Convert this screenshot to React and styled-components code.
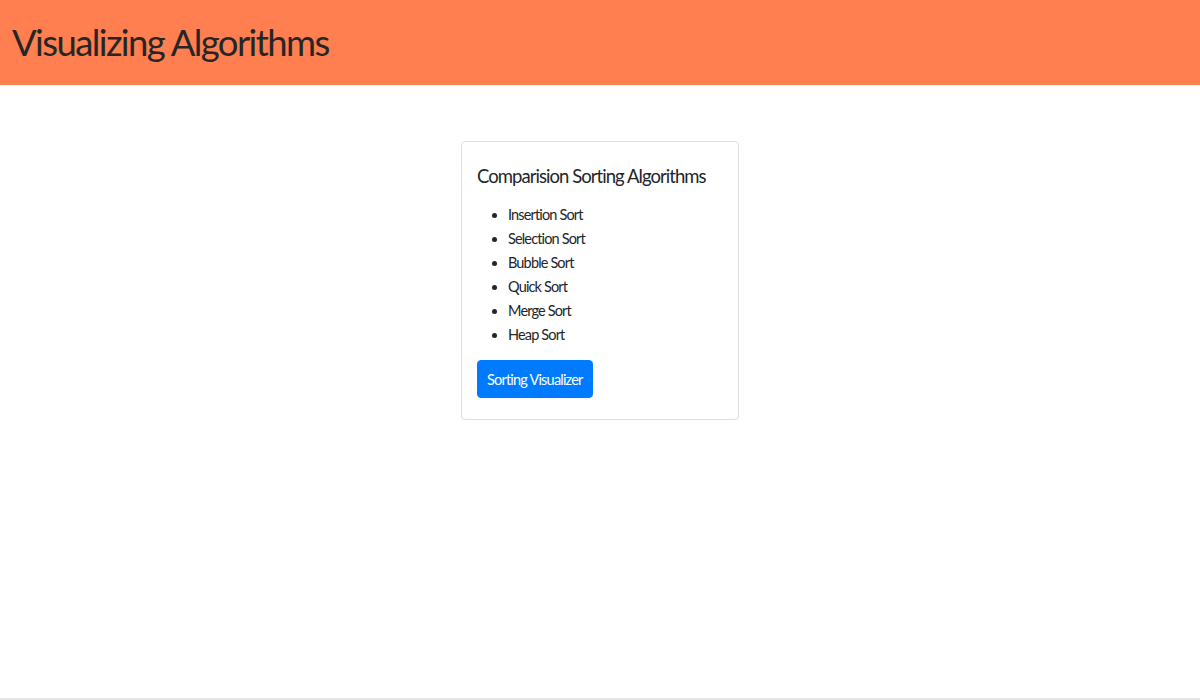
import React from "react";
import styled, { createGlobalStyle } from "styled-components";

const GlobalStyle = createGlobalStyle`
  body {
    margin: 0;
    font-family: Lato, "Noto Sans", sans-serif;
    color: #212529;
    background: #fff;
  }
`;

const Page = styled.div`
  min-height: 700px;
  box-sizing: border-box;
  display: flex;
  flex-direction: column;
  border-bottom: 2px solid #e6e6e6;
`;

const Header = styled.header`
  height: 85px;
  background: #ff7f50;
  display: flex;
  align-items: center;
  padding: 0 12px;
`;

const Title = styled.h1`
  margin: 0 0 2px;
  font-size: 36.5px;
  font-weight: 400;
  letter-spacing: -1.6px;
  color: #262626;
`;

const Main = styled.main`
  display: flex;
  justify-content: center;
  padding-top: 56px;
`;

const Card = styled.section`
  width: 278px;
  box-sizing: border-box;
  border: 1px solid #dfdfdf;
  border-radius: 4px;
  padding: 20px 15px 21px;
`;

const CardTitle = styled.h2`
  margin: 0 0 12px;
  font-size: 18.5px;
  font-weight: 400;
  line-height: 28px;
  letter-spacing: -0.95px;
  white-space: nowrap;
`;

const List = styled.ul`
  margin: 0 0 14px;
  padding-left: 31px;
`;

const Item = styled.li`
  font-size: 14.5px;
  line-height: 24px;
  letter-spacing: -0.85px;
  padding-top: 1px;
  margin-bottom: -1px;
`;

const Button = styled.button`
  font-family: inherit;
  font-size: 14.5px;
  letter-spacing: -0.8px;
  color: #fff;
  background: #007bff;
  border: 1px solid #007bff;
  border-radius: 4px;
  height: 38px;
  padding: 0 9px;
  cursor: pointer;
`;

const algorithms = [
  "Insertion Sort",
  "Selection Sort",
  "Bubble Sort",
  "Quick Sort",
  "Merge Sort",
  "Heap Sort",
];

export default function App() {
  return (
    <Page>
      <GlobalStyle />
      <Header>
        <Title>Visualizing Algorithms</Title>
      </Header>
      <Main>
        <Card>
          <CardTitle>Comparision Sorting Algorithms</CardTitle>
          <List>
            {algorithms.map((name) => (
              <Item key={name}>{name}</Item>
            ))}
          </List>
          <Button>Sorting Visualizer</Button>
        </Card>
      </Main>
    </Page>
  );
}
